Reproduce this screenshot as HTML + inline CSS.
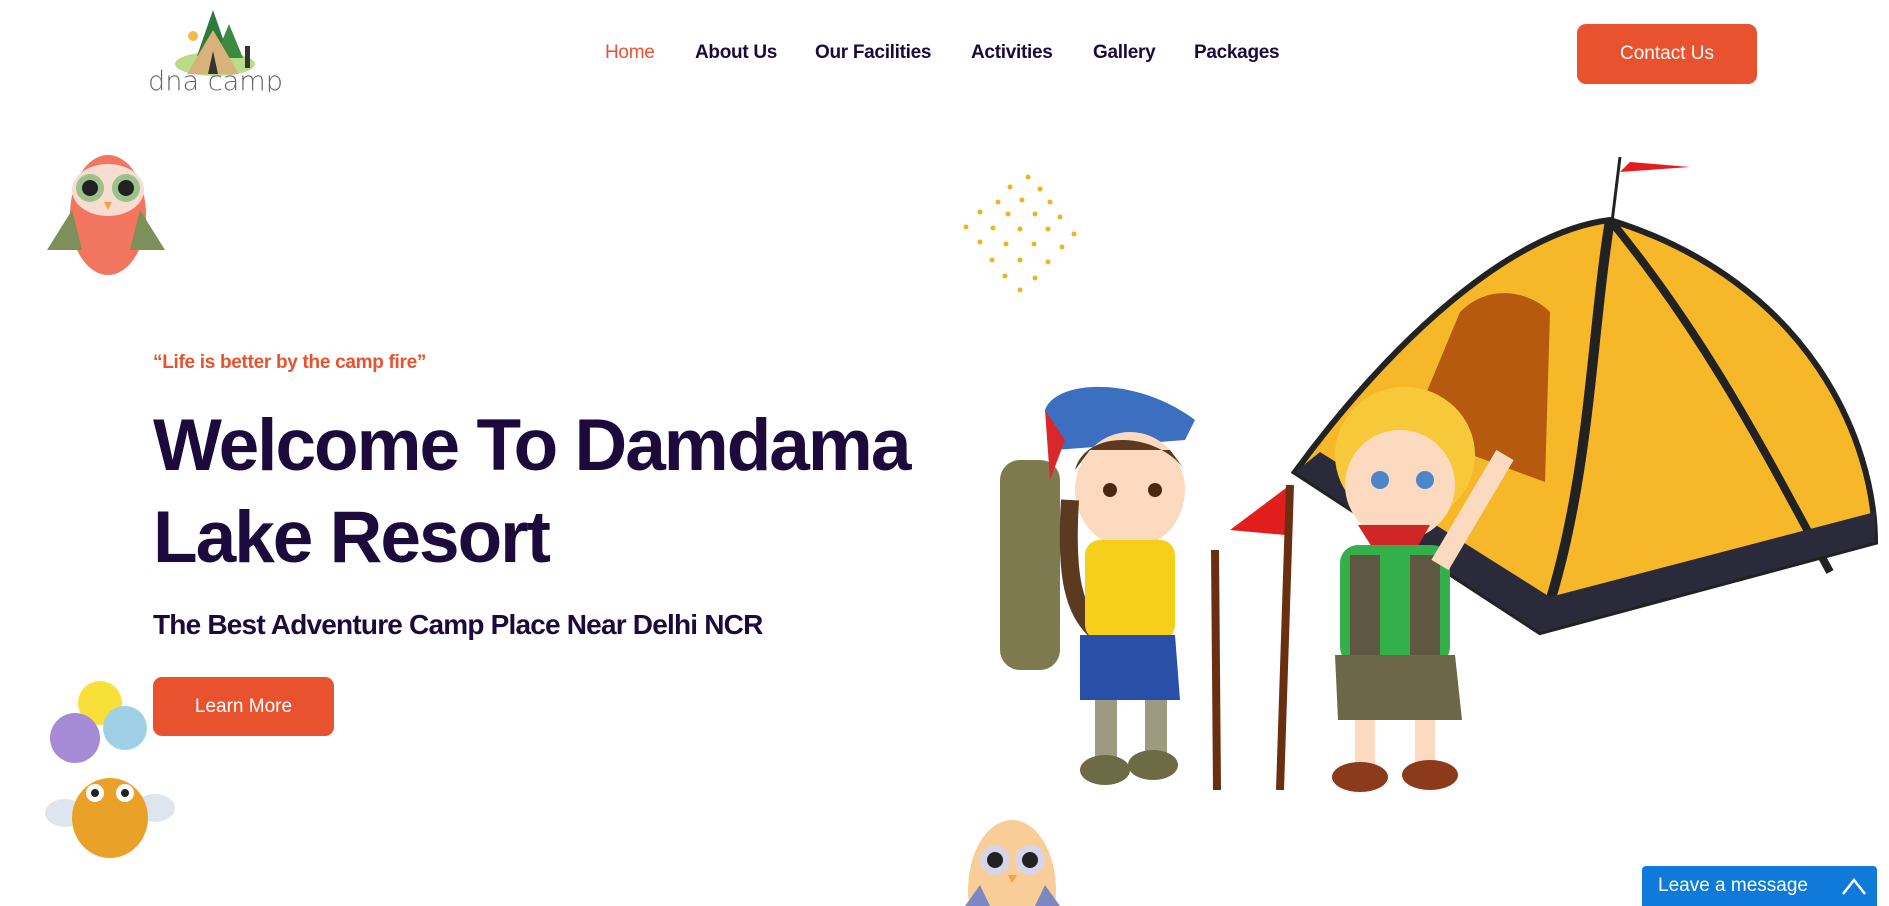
<!DOCTYPE html>
<html><head><meta charset="utf-8"><style>
*{margin:0;padding:0;box-sizing:border-box}
html,body{width:1889px;height:906px;overflow:hidden}
body{background:#fff;font-family:"Liberation Sans",sans-serif;position:relative}
.a{position:absolute}
.nav a{position:absolute;top:42px;font-size:19px;font-weight:bold;color:#1c0a3d;text-decoration:none;white-space:nowrap;letter-spacing:-0.3px}
.btn{background:#e9522f;color:#fff;border-radius:9px;display:flex;align-items:center;justify-content:center;font-size:19px}
h1{position:absolute;left:153px;top:400px;font-size:73px;line-height:92px;color:#1c0a3d;font-weight:bold;letter-spacing:-2px}
</style></head><body>
<!-- logo -->
<svg class="a" style="left:147px;top:6px" width="140" height="86" viewBox="0 0 140 86">
<ellipse cx="68" cy="58" rx="40" ry="12" fill="#b8dc8a"/>
<polygon points="66,4 50,50 82,50" fill="#2f7a3a"/><polygon points="82,18 68,52 96,52" fill="#3b8a40"/>
<polygon points="66,24 40,68 92,68" fill="#d8b27a"/><polygon points="66,45 61,68 71,68" fill="#333"/>
<circle cx="46" cy="30" r="5" fill="#f6b94a"/><rect x="98" y="40" width="5" height="22" fill="#333"/>
<text x="1" y="84" font-family="DejaVu Sans" font-weight="200" font-size="27" fill="#666" textLength="135" lengthAdjust="spacingAndGlyphs">dna camp</text>
</svg>
<div class="nav">
<a style="left:605px;color:#e9522f;font-weight:normal">Home</a>
<a style="left:695px">About Us</a>
<a style="left:815px">Our Facilities</a>
<a style="left:971px">Activities</a>
<a style="left:1093px">Gallery</a>
<a style="left:1194px">Packages</a>
</div>
<div class="a btn" style="left:1577px;top:24px;width:180px;height:60px">Contact Us</div>
<!-- owl top left -->
<svg class="a" style="left:42px;top:140px" width="128" height="142" viewBox="0 0 128 142">
<ellipse cx="66" cy="75" rx="38" ry="60" fill="#f2755f"/>
<polygon points="5,110 30,70 40,110" fill="#7e8f5a"/><polygon points="123,110 98,70 88,110" fill="#7e8f5a"/>
<ellipse cx="66" cy="50" rx="36" ry="26" fill="#f6ddd0"/>
<circle cx="48" cy="48" r="14" fill="#9cc28c"/><circle cx="84" cy="48" r="14" fill="#9cc28c"/>
<circle cx="48" cy="48" r="8" fill="#222"/><circle cx="84" cy="48" r="8" fill="#222"/>
<polygon points="62,62 70,62 66,70" fill="#f6a04a"/>
</svg>
<!-- dots -->
<svg class="a" style="left:960px;top:172px" width="130" height="125">
<g fill="#f2b11e">
<circle cx="68" cy="5" r="2.5"/><circle cx="50" cy="15" r="2.5"/><circle cx="80" cy="17" r="2.5"/><circle cx="38" cy="30" r="2.5"/><circle cx="62" cy="28" r="2.5"/><circle cx="90" cy="30" r="2.5"/>
<circle cx="20" cy="40" r="2.5"/><circle cx="48" cy="42" r="2.5"/><circle cx="75" cy="42" r="2.5"/><circle cx="100" cy="45" r="2.5"/><circle cx="6" cy="55" r="2.5"/><circle cx="33" cy="56" r="2.5"/><circle cx="60" cy="57" r="2.5"/><circle cx="88" cy="57" r="2.5"/><circle cx="114" cy="62" r="2.5"/>
<circle cx="20" cy="70" r="2.5"/><circle cx="46" cy="72" r="2.5"/><circle cx="74" cy="72" r="2.5"/><circle cx="102" cy="75" r="2.5"/><circle cx="32" cy="88" r="2.5"/><circle cx="60" cy="88" r="2.5"/><circle cx="88" cy="90" r="2.5"/><circle cx="45" cy="104" r="2.5"/><circle cx="75" cy="106" r="2.5"/><circle cx="60" cy="118" r="2.5"/>
</g></svg>
<!-- tent -->
<svg class="a" style="left:1290px;top:142px" width="599" height="500" viewBox="0 0 599 500">
<polygon points="330,30 400,25 340,20 345,15" fill="#e21d1d"/><line x1="330" y1="15" x2="322" y2="80" stroke="#222" stroke-width="3"/>
<path d="M320,78 C220,90 100,200 5,330 L250,490 L585,400 C585,300 520,140 320,78Z" fill="#f6b829" stroke="#222" stroke-width="6"/>
<path d="M320,78 C300,200 300,350 250,490" stroke="#222" stroke-width="10" fill="none"/>
<path d="M320,78 C420,200 480,320 540,430" stroke="#222" stroke-width="8" fill="none"/>
<path d="M170,170 C200,140 240,150 260,170 L255,340 L120,290Z" fill="#b65a10"/>
<path d="M5,330 L250,490 L585,400 L585,370 L260,455 L30,310Z" fill="#2a2a3a"/>
</svg>
<!-- girl -->
<svg class="a" style="left:995px;top:380px" width="245" height="420" viewBox="0 0 245 420">
<rect x="5" y="80" width="60" height="210" rx="20" fill="#7c7a4e"/>
<path d="M50,30 C60,0 140,-5 200,40 L190,60 L60,70Z" fill="#3c6fbf"/><path d="M50,30 L55,100 L70,60Z" fill="#d9282b"/>
<ellipse cx="135" cy="110" rx="55" ry="58" fill="#fbdac0"/><path d="M80,90 C90,50 160,50 190,90 L175,70 L95,70Z" fill="#5b3a1f"/>
<path d="M75,120 C70,200 80,230 100,250" stroke="#5b3a1f" stroke-width="18" fill="none"/>
<circle cx="115" cy="110" r="7" fill="#4a2810"/><circle cx="160" cy="110" r="7" fill="#4a2810"/>
<rect x="90" y="160" width="90" height="100" rx="15" fill="#f5cf1a"/>
<path d="M85,255 L180,255 L185,320 L85,320Z" fill="#2a4fa8"/>
<rect x="100" y="320" width="22" height="60" fill="#9e9a80"/><rect x="150" y="320" width="22" height="60" fill="#9e9a80"/>
<ellipse cx="110" cy="390" rx="25" ry="15" fill="#6c6b45"/><ellipse cx="158" cy="385" rx="25" ry="15" fill="#6c6b45"/>
<line x1="220" y1="170" x2="222" y2="410" stroke="#6a2e10" stroke-width="8"/>
</svg>
<!-- boy -->
<svg class="a" style="left:1230px;top:365px" width="290" height="435" viewBox="0 0 290 435">
<polygon points="60,120 0,165 55,170" fill="#e21d1d"/><line x1="60" y1="120" x2="50" y2="425" stroke="#6a2e10" stroke-width="8"/>
<ellipse cx="175" cy="90" rx="70" ry="68" fill="#f7c93a"/><ellipse cx="170" cy="120" rx="55" ry="55" fill="#fbdac0"/>
<circle cx="150" cy="115" r="9" fill="#4c86c9"/><circle cx="195" cy="115" r="9" fill="#4c86c9"/>
<path d="M128,160 L200,160 L180,195 L150,195Z" fill="#d02628"/>
<rect x="110" y="180" width="110" height="120" rx="18" fill="#34b04a"/><rect x="120" y="190" width="30" height="100" fill="#5e5842"/><rect x="180" y="190" width="30" height="100" fill="#5e5842"/>
<path d="M105,290 L225,290 L232,355 L108,355Z" fill="#6b6748"/>
<rect x="125" y="355" width="20" height="50" fill="#fbdac0"/><rect x="185" y="355" width="20" height="50" fill="#fbdac0"/>
<ellipse cx="130" cy="412" rx="28" ry="15" fill="#8b3a1a"/><ellipse cx="200" cy="410" rx="28" ry="15" fill="#8b3a1a"/>
<path d="M210,200 L275,90" stroke="#fbdac0" stroke-width="20"/>
</svg>
<div class="a" style="left:153px;top:352px;font-size:19px;font-weight:bold;color:#e9522f;letter-spacing:-0.3px">“Life is better by the camp fire”</div>
<h1>Welcome To Damdama<br>Lake Resort</h1>
<div class="a" style="left:153px;top:609px;font-size:28px;font-weight:bold;color:#1c0a3d;letter-spacing:-0.8px">The Best Adventure Camp Place Near Delhi NCR</div>
<div class="a btn" style="left:153px;top:677px;width:181px;height:59px">Learn More</div>
<!-- bee with balloons -->
<svg class="a" style="left:45px;top:678px" width="135" height="185" viewBox="0 0 135 185">
<circle cx="55" cy="25" r="22" fill="#f7e03a"/><circle cx="30" cy="60" r="25" fill="#a58ad6"/><circle cx="80" cy="50" r="22" fill="#9fd0e6"/>
<ellipse cx="20" cy="135" rx="20" ry="14" fill="#dde6ee"/><ellipse cx="110" cy="130" rx="20" ry="14" fill="#dde6ee"/>
<ellipse cx="65" cy="140" rx="38" ry="40" fill="#e9a227"/><circle cx="50" cy="115" r="9" fill="#fff"/><circle cx="80" cy="115" r="9" fill="#fff"/>
<circle cx="50" cy="115" r="4" fill="#222"/><circle cx="80" cy="115" r="4" fill="#222"/>
</svg>
<!-- owl bottom -->
<svg class="a" style="left:960px;top:815px" width="105" height="91" viewBox="0 0 105 91">
<ellipse cx="52" cy="75" rx="44" ry="70" fill="#f8cd98"/><circle cx="35" cy="45" r="15" fill="#d7d4e8"/><circle cx="70" cy="45" r="15" fill="#d7d4e8"/>
<circle cx="35" cy="45" r="8" fill="#222"/><circle cx="70" cy="45" r="8" fill="#222"/><polygon points="48,60 57,60 52,68" fill="#f6a04a"/>
<polygon points="5,91 20,70 30,91" fill="#7d87c2"/><polygon points="100,91 85,70 75,91" fill="#7d87c2"/>
</svg>
<div class="a" style="left:1642px;top:866px;width:235px;height:40px;background:#0f7ad9;color:#fff;font-size:19px;display:flex;align-items:center;padding-left:16px;border-radius:4px 4px 0 0">Leave a message
<svg style="position:absolute;right:10px;top:10px" width="26" height="20"><path d="M2,18 L13,4 L24,18" stroke="#fff" stroke-width="2.5" fill="none"/></svg></div>
</body></html>
